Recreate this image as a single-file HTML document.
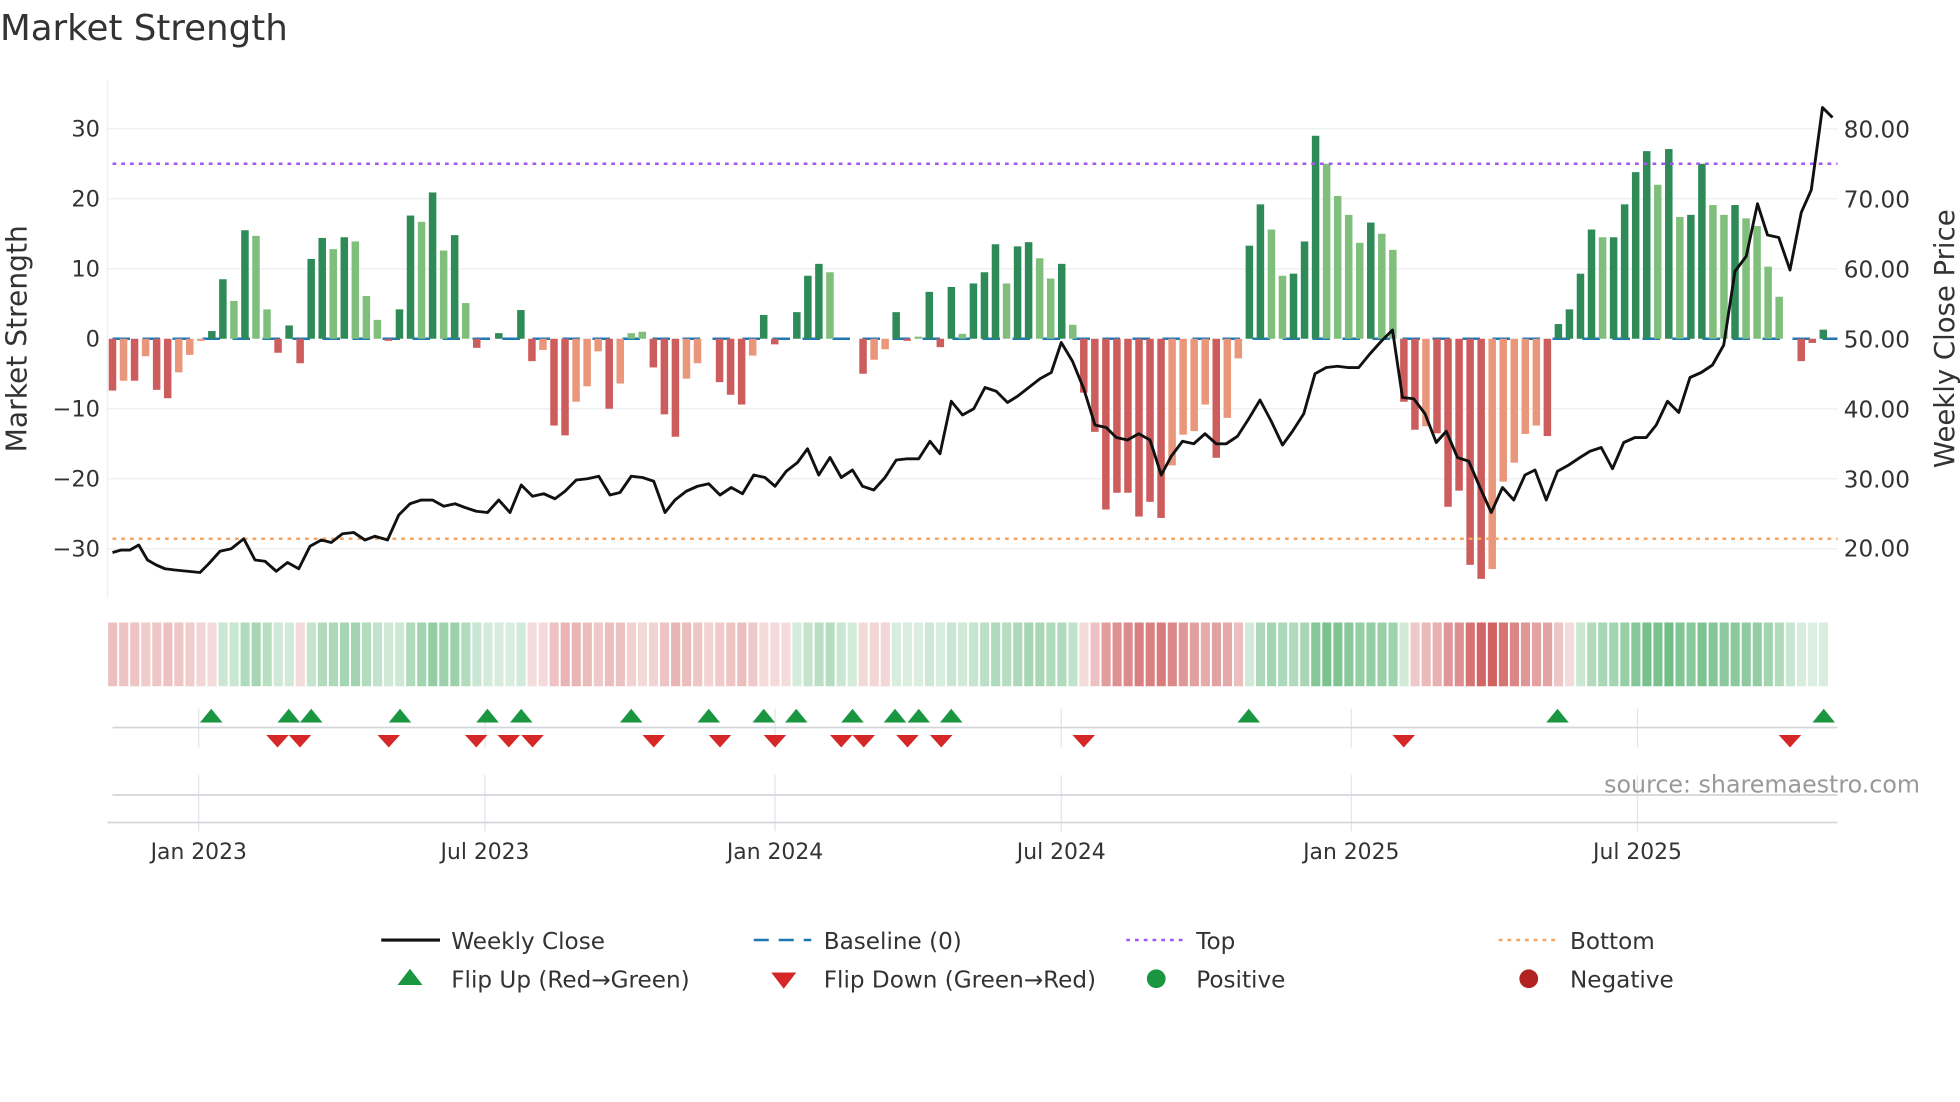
<!DOCTYPE html>
<html><head><meta charset="utf-8"><style>
html,body{margin:0;padding:0;background:#fff;width:1960px;height:1102px;overflow:hidden}
svg{display:block}
text{font-family:"DejaVu Sans","Liberation Sans",sans-serif}
</style></head><body>
<svg id="s" width="1960" height="1102" viewBox="0 0 1568 881.6" xmlns="http://www.w3.org/2000/svg">
<rect width="1568" height="882" fill="#fff"/>
<text x="0" y="32" font-size="28.5" fill="#333">Market Strength</text>
<g stroke="#eef0f4" stroke-width="1.2">
<line x1="86" y1="103" x2="1470" y2="103"/><line x1="86" y1="159" x2="1470" y2="159"/><line x1="86" y1="215" x2="1470" y2="215"/><line x1="86" y1="327" x2="1470" y2="327"/><line x1="86" y1="383" x2="1470" y2="383"/><line x1="86" y1="439" x2="1470" y2="439"/>
</g>
<line x1="86" y1="64" x2="86" y2="478" stroke="#eef0f4" stroke-width="1.2"/>
<g font-size="18" fill="#333" text-anchor="end">
<text x="80" y="109">30</text><text x="80" y="165">20</text><text x="80" y="221">10</text><text x="80" y="277">0</text><text x="80" y="333">−10</text><text x="80" y="389">−20</text><text x="80" y="445">−30</text>
</g>
<g font-size="18.5" fill="#333">
<text x="1475" y="110">80.00</text><text x="1475" y="166">70.00</text><text x="1475" y="222">60.00</text><text x="1475" y="278">50.00</text><text x="1475" y="334">40.00</text><text x="1475" y="390">30.00</text><text x="1475" y="445">20.00</text>
</g>
<text transform="translate(21,271) rotate(-90)" font-size="22.5" fill="#333" text-anchor="middle">Market Strength</text>
<text transform="translate(1563,271) rotate(-90)" font-size="22" fill="#333" text-anchor="middle">Weekly Close Price</text>
<line x1="90" y1="271" x2="1470" y2="271" stroke="#1f77b4" stroke-width="2" stroke-dasharray="14,10"/>
<g id="bars"></g>
<line x1="90" y1="131" x2="1470" y2="131" stroke="#a259f0" stroke-width="2" stroke-dasharray="3,4"/>
<line x1="90" y1="431" x2="1470" y2="431" stroke="#f4a460" stroke-width="2" stroke-dasharray="3,4"/>
<polyline fill="none" stroke="#111" stroke-width="2.3" stroke-linejoin="round" points="90,442 97,440 104,440 111,436 118,448 125,452 132,455 140,456 150,457 160,458 167,451 176,441 185,439 195,431 204,448 212,449 221,457 230,450 239,455 248,437 257,432 265,434 274,427 283,426 292,432 300,429 310,432 319,412 328,403 337,400 346,400 355,405 364,403 372,406 381,409 390,410 399,400 408,410 417,388 426,397 435,395 444,399 452,393 461,384 470,383 479,381 488,396 496,394 505,381 514,382 523,385 532,410 540,400 549,393 558,389 567,387 576,396 585,390 594,395 603,380 612,382 620,389 629,377 638,370 646,359 655,380 664,366 673,382 682,376 690,389 699,392 708,382 717,368 726,367 735,367 744,353 752,363 761,321 770,332 779,327 788,310 797,313 806,322 814,317 823,310 832,303 841,298 849,274 858,289 867,311 876,340 885,342 893,350 902,352 911,347 920,352 929,380 937,365 946,353 955,355 964,347 973,355 981,355 990,349 999,335 1008,320 1017,337 1026,356 1034,345 1043,331 1052,299 1061,294 1070,293 1078,294 1087,294 1096,283 1105,273 1114,264 1122,318 1131,319 1140,331 1149,354 1157,345 1166,366 1175,369 1184,390 1193,410 1202,390 1211,400 1220,380 1228,376 1237,400 1246,377 1255,372 1264,366 1272,361 1281,358 1290,375 1299,354 1308,350 1317,350 1325,340 1334,321 1343,330 1352,302 1361,298 1370,292 1379,276 1388,217 1397,205 1406,163 1414,188 1423,190 1432,216 1441,170 1449,152 1458,86 1466,94"/>
<g id="heat"></g>
<g stroke="#e2e4ea" stroke-width="1">
<line x1="159" y1="567" x2="159" y2="598"/><line x1="388" y1="567" x2="388" y2="598"/><line x1="620" y1="567" x2="620" y2="598"/><line x1="849" y1="567" x2="849" y2="598"/><line x1="1081" y1="567" x2="1081" y2="598"/><line x1="1310" y1="567" x2="1310" y2="598"/>
<line x1="159" y1="620" x2="159" y2="665"/><line x1="388" y1="620" x2="388" y2="665"/><line x1="620" y1="620" x2="620" y2="665"/><line x1="849" y1="620" x2="849" y2="665"/><line x1="1081" y1="620" x2="1081" y2="665"/><line x1="1310" y1="620" x2="1310" y2="665"/>
</g>
<line x1="90" y1="582" x2="1470" y2="582" stroke="#d4d6dc" stroke-width="1.4"/>
<line x1="90" y1="636" x2="1470" y2="636" stroke="#d4d6dc" stroke-width="1.4"/>
<line x1="86" y1="658" x2="1470" y2="658" stroke="#d4d6dc" stroke-width="1.4"/>
<g id="mk"></g>
<g font-size="17.5" fill="#333" text-anchor="middle">
<text x="159" y="687">Jan 2023</text><text x="388" y="687">Jul 2023</text><text x="620" y="687">Jan 2024</text><text x="849" y="687">Jul 2024</text><text x="1081" y="687">Jan 2025</text><text x="1310" y="687">Jul 2025</text>
</g>
<text x="1536" y="634" font-size="19" fill="#999" text-anchor="end">source: sharemaestro.com</text>
<g font-size="18.5" fill="#333">
<line x1="305" y1="752" x2="352" y2="752" stroke="#111" stroke-width="2.5"/><text x="361" y="759">Weekly Close</text>
<line x1="603" y1="752" x2="649" y2="752" stroke="#1f77b4" stroke-width="2" stroke-dasharray="12,8"/><text x="659" y="759">Baseline (0)</text>
<line x1="901" y1="752" x2="946" y2="752" stroke="#a259f0" stroke-width="2" stroke-dasharray="3,4"/><text x="957" y="759">Top</text>
<line x1="1199" y1="752" x2="1244" y2="752" stroke="#f4a460" stroke-width="2" stroke-dasharray="3,4"/><text x="1256" y="759">Bottom</text>
<polygon points="318,788 338,788 328,775" fill="#1a9641"/><text x="361" y="790">Flip Up (Red→Green)</text>
<polygon points="617,778 637,778 627,791" fill="#d62728"/><text x="659" y="790">Flip Down (Green→Red)</text>
<circle cx="925" cy="783" r="7.5" fill="#1a9641"/><text x="957" y="790">Positive</text>
<circle cx="1223" cy="783" r="7.5" fill="#b22222"/><text x="1256" y="790">Negative</text>
</g>
</svg>
<script>
var d="-7.4R -6r -6R -2.5r -7.3R -8.5R -4.8r -2.3r -0.3r 1.1G 8.5G 5.4g 15.5G 14.7g 4.2g -2R 1.9G -3.5R 11.4G 14.4G 12.8g 14.5G 13.9g 6.1g 2.7g -0.3R 4.2G 17.6G 16.7g 20.9G 12.6g 14.8G 5.1g -1.3R 0G 0.8G 0G 4.1G -3.2R -1.6r -12.4R -13.8R -9r -6.8r -1.8r -10R -6.4r 0.8g 1g -4.1R -10.8R -14R -5.7r -3.5r 0R -6.2R -8R -9.4R -2.4r 3.4G -0.8R 0G 3.8G 9G 10.7G 9.5g 0G 0G -5R -3r -1.5r 3.8G -0.3R 0.3g 6.7G -1.2R 7.4G 0.7g 7.9G 9.5G 13.5G 7.9g 13.2G 13.8G 11.5g 8.6g 10.7G 2g -7.7R -13.3R -24.4R -22R -22R -25.4R -23.3R -25.6R -18.1r -13.7r -13.2r -9.4r -17R -11.3r -2.8r 13.3G 19.2G 15.6g 9g 9.3G 13.9G 29G 25g 20.4g 17.7g 13.7g 16.6G 15g 12.7g -9R -13R -12.5r -13.5R -24R -21.7R -32.3R -34.3R -32.9r -20.4r -17.7r -13.6r -12.4r -13.9R 2.1G 4.2G 9.3G 15.6G 14.5g 14.5G 19.2G 23.8G 26.8G 22g 27.1G 17.4g 17.7G 25G 19.1g 17.7g 19.1G 17.2g 16.1g 10.3g 6g 0G -3.2R -0.6R 1.3G".split(" ");
var C={G:"#2e8b57",g:"#7fbf7b",R:"#cd5c5c",r:"#e9967a"};
var NS="http://www.w3.org/2000/svg",b=document.getElementById("bars"),h=document.getElementById("heat"),m=document.getElementById("mk");
function el(t,a,p){var e=document.createElementNS(NS,t);for(var k in a)e.setAttribute(k,a[k]);p.appendChild(e);}
var sm=0;
d.forEach(function(s,i){var v=parseFloat(s),t=s.slice(-1),x=90+i*8.83;
 if(v!==0){var y=271-5.6*Math.max(v,0),hh=Math.abs(v)*5.6;el("rect",{x:x-3,y:v>0?y:271,width:6,height:hh,fill:C[t]},b);}
 sm=i==0?v:sm*0.5+v*0.5;
 var a=Math.min(0.85,0.18+Math.abs(sm)/32*0.7);
 el("rect",{x:x-3.5,y:498,width:7.3,height:51,fill:sm>=0?"rgb(60,165,90)":"rgb(200,70,70)","fill-opacity":a},h);
});
[169,231,249,320,390,417,505,567,611,637,682,716,735,761,999,1246,1459].forEach(function(x){el("polygon",{points:(x-9)+",578 "+(x+9)+",578 "+x+",567",fill:"#1a9641"},m);});
[222,240,311,381,407,426,523,576,620,673,691,726,753,867,1123,1432].forEach(function(x){el("polygon",{points:(x-9)+",588 "+(x+9)+",588 "+x+",598",fill:"#d62728"},m);});
</script>
</body></html>
